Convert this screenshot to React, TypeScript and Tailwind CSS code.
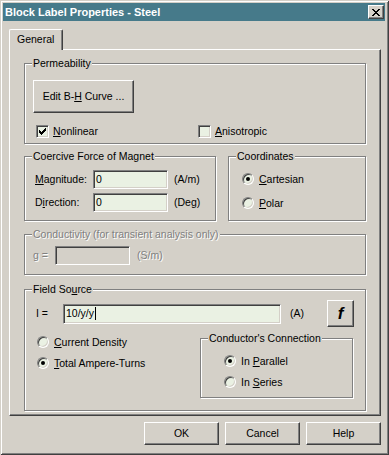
import React from 'react';

// classic 3D edges
const sunken =
  'border border-t-[#808080] border-l-[#808080] border-r-white border-b-white shadow-[inset_1px_1px_#404040,inset_-1px_-1px_#d4d0c8]';
const raised =
  'border border-t-white border-l-white border-r-[#404040] border-b-[#404040] shadow-[inset_-1px_-1px_#808080]';
const dis = 'text-[#808080] [text-shadow:1px_1px_0_#fff]';

function Group({
  label,
  className = '',
  disabled = false,
  children,
}: {
  label: React.ReactNode;
  className?: string;
  disabled?: boolean;
  children?: React.ReactNode;
}) {
  return (
    <div className={`relative shrink-0 border border-[#808080] shadow-[inset_1px_1px_#fff,1px_1px_#fff] ${className}`}>
      <span className={`absolute left-[7px] -top-[8px] bg-[#d4d0c8] px-[1px] leading-[14px] whitespace-nowrap ${disabled ? dis : ''}`}>
        {label}
      </span>
      {children}
    </div>
  );
}

const CHECK = [
  [6, 0, 1], [5, 1, 2], [0, 2, 1], [4, 2, 3], [0, 3, 2], [3, 3, 3], [0, 4, 5], [1, 5, 3], [2, 6, 1],
];

function Checkbox({ checked = false }: { checked?: boolean }) {
  return (
    <span className={`relative block h-[13px] w-[13px] shrink-0 bg-[#eaf1e3] ${sunken}`}>
      {checked && (
        <svg className="absolute left-[2px] top-[2px]" width="7" height="7" viewBox="0 0 7 7" shapeRendering="crispEdges">
          {CHECK.map(([x, y, w], i) => (
            <rect key={i} x={x} y={y} width={w} height="1" fill="#000" />
          ))}
        </svg>
      )}
    </span>
  );
}

function Radio({ checked = false }: { checked?: boolean }) {
  return (
    <span className="relative block h-[12px] w-[12px] shrink-0 rounded-full border border-t-[#808080] border-l-[#808080] border-r-white border-b-white bg-[#eaf1e3] shadow-[inset_1px_1px_#404040,inset_-1px_-1px_#d4d0c8]">
      {checked && <span className="absolute left-[3px] top-[3px] h-[4px] w-[4px] rounded-full bg-black" />}
    </span>
  );
}

function RadioRow({ checked, children, className = '' }: { checked?: boolean; children: React.ReactNode; className?: string }) {
  return (
    <div className={`flex h-[12px] items-center gap-[5px] whitespace-nowrap ${className}`}>
      <Radio checked={checked} />
      <span>{children}</span>
    </div>
  );
}

function Field({ value, className = '', disabled = false, caret = false }: { value?: string; className?: string; disabled?: boolean; caret?: boolean }) {
  return (
    <div className={`flex shrink-0 items-center pl-[2px] ${disabled ? 'bg-[#d4d0c8]' : 'bg-[#eaf1e3]'} ${sunken} ${className}`}>
      <span>{value}</span>
      {caret && <span className="ml-[1px] block h-[13px] w-[1px] bg-black" />}
    </div>
  );
}

function Button({ children, className = '' }: { children: React.ReactNode; className?: string }) {
  return <div className={`flex shrink-0 items-center justify-center bg-[#d4d0c8] ${raised} ${className}`}>{children}</div>;
}

const CLOSE = [
  [0, 0, 2], [6, 0, 2], [1, 1, 2], [5, 1, 2], [2, 2, 4], [3, 3, 2], [2, 4, 4], [1, 5, 2], [5, 5, 2], [0, 6, 2], [6, 6, 2],
];

export default function App() {
  return (
    <div className="h-[455px] w-[389px] overflow-hidden bg-[#d4d0c8] pl-[3px] pt-[3px] font-['Liberation_Sans',Arial,sans-serif] text-[10.5px] leading-[13px] text-black shadow-[inset_1px_1px_#d4d0c8,inset_-1px_-1px_#404040,inset_2px_2px_#fff,inset_-2px_-2px_#808080]">
      {/* Title bar */}
      <div className="flex h-[18px] w-[382px] items-center justify-between bg-[#467a8a] pl-[2px] pr-[1px]">
        <span className="text-[11px] font-bold text-white">Block Label Properties - Steel</span>
        <Button className="h-[14px] w-[16px]">
          <svg width="8" height="7" viewBox="0 0 8 7" shapeRendering="crispEdges">
            {CLOSE.map(([x, y, w], i) => (
              <rect key={i} x={x} y={y} width={w} height="1" fill="#000" />
            ))}
          </svg>
        </Button>
      </div>

      {/* Tab */}
      <div className="ml-[6px] mt-[8px] flex">
        <div className="relative z-10 -mb-[1px] h-[21px] w-[54px] rounded-t-[2px] border-l border-t border-r border-l-white border-t-white border-r-[#404040] bg-[#d4d0c8] pl-[7px] pt-[3px] shadow-[inset_-1px_0_#808080]">
          General
        </div>
      </div>

      {/* Panel */}
      <div className="ml-[6px] h-[367px] w-[372px] border border-t-white border-l-white border-r-[#404040] border-b-[#404040] pl-[14px] pt-[13px] shadow-[inset_-1px_-1px_#808080]">
        <Group label="Permeability" className="h-[81px] w-[342px]">
          <Button className="ml-[8px] mt-[16px] h-[33px] w-[101px]">
            <span>
              Edit B-<u>H</u> Curve ...
            </span>
          </Button>
          <div className="mt-[12px] flex items-center pl-[11px]">
            <div className="flex w-[162px] items-center gap-[4px]">
              <Checkbox checked />
              <span>
                <u>N</u>onlinear
              </span>
            </div>
            <div className="flex items-center gap-[4px]">
              <Checkbox />
              <span>
                <u>A</u>nisotropic
              </span>
            </div>
          </div>
        </Group>

        <div className="mt-[12px] flex">
          <Group label="Coercive Force of Magnet" className="h-[65px] w-[192px]">
            <div className="mt-[13px] flex h-[19px] items-center pl-[10px]">
              <span className="w-[58px]">
                <u>M</u>agnitude:
              </span>
              <Field value="0" className="h-[19px] w-[75px]" />
              <span className="ml-[6px]">(A/m)</span>
            </div>
            <div className="mt-[4px] flex h-[19px] items-center pl-[10px]">
              <span className="w-[58px]">
                D<u>i</u>rection:
              </span>
              <Field value="0" className="h-[19px] w-[75px]" />
              <span className="ml-[6px]">(Deg)</span>
            </div>
          </Group>
          <Group label="Coordinates" className="ml-[12px] h-[65px] w-[138px]">
            <RadioRow checked className="ml-[13px] mt-[16px]">
              <u>C</u>artesian
            </RadioRow>
            <RadioRow className="ml-[13px] mt-[12px]">
              <u>P</u>olar
            </RadioRow>
          </Group>
        </div>

        <Group label="Conductivity (for transient analysis only)" disabled className="mt-[13px] h-[41px] w-[342px]">
          <div className="mt-[11px] flex h-[19px] items-center pl-[8px]">
            <span className={`w-[22px] ${dis}`}>
              <u>g</u> =
            </span>
            <Field disabled className="h-[19px] w-[75px]" />
            <span className={`ml-[7px] ${dis}`}>(S/m)</span>
          </div>
        </Group>

        <Group
          label={
            <>
              Field So<u>u</u>rce
            </>
          }
          className="mt-[14px] h-[122px] w-[342px]"
        >
          <div className="mt-[10px] flex h-[27px] items-center pl-[11px]">
            <span className="w-[27px]">I =</span>
            <Field value="10/y/y" caret className="h-[20px] w-[218px]" />
            <span className="ml-[9px] w-[37px]">(A)</span>
            <Button className="h-[27px] w-[27px]">
              <span className="font-['Liberation_Sans',Arial,sans-serif] text-[17px] font-bold italic leading-none">f</span>
            </Button>
          </div>
          <div className="mt-[9px] flex items-start">
            <div className="w-[175px] pl-[12px]">
              <RadioRow>
                <u>C</u>urrent Density
              </RadioRow>
              <RadioRow checked className="mt-[9px]">
                <u>T</u>otal Ampere-Turns
              </RadioRow>
            </div>
            <Group label="Conductor's Connection" className="mt-[2px] h-[60px] w-[153px]">
              <RadioRow checked className="ml-[23px] mt-[16px]">
                In <u>P</u>arallel
              </RadioRow>
              <RadioRow className="ml-[23px] mt-[9px]">
                In <u>S</u>eries
              </RadioRow>
            </Group>
          </div>
        </Group>
      </div>

      {/* Dialog buttons */}
      <div className="mt-[6px] flex justify-end gap-[6px] pr-[8px]">
        <Button className="h-[23px] w-[75px]">OK</Button>
        <Button className="h-[23px] w-[75px]">Cancel</Button>
        <Button className="h-[23px] w-[75px]">Help</Button>
      </div>
    </div>
  );
}
